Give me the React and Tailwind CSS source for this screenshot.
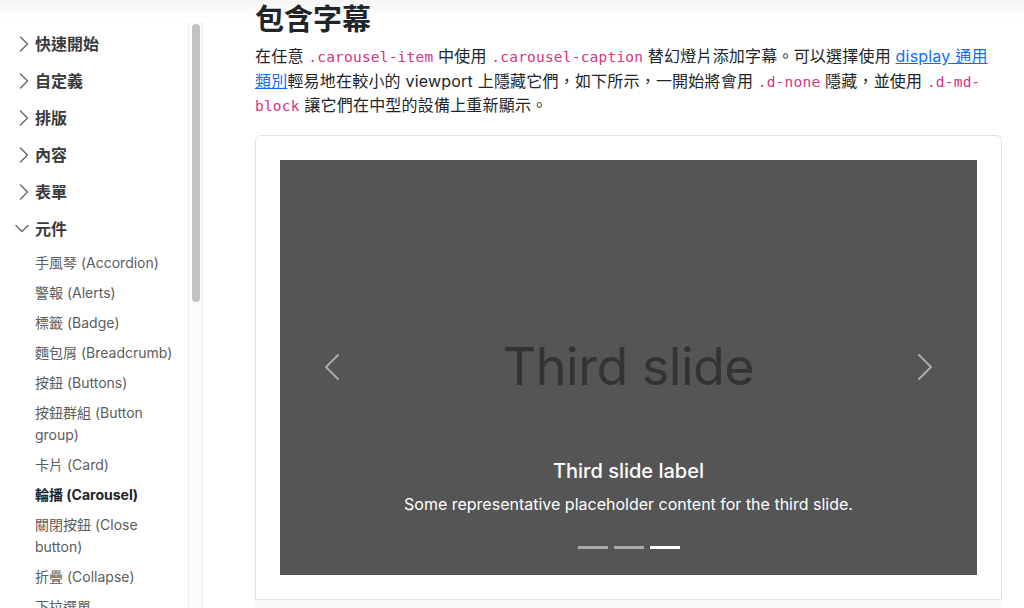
import React from 'react';

const font = 'font-[Inter,"Noto_Sans_CJK_TC",sans-serif]';
const mono = 'font-[DejaVu_Sans_Mono,"Liberation_Mono",monospace] text-[14.5px] leading-none text-[#d63384]';

const sections = ['快速開始', '自定義', '排版', '內容', '表單'];

const components = [
  ['手風琴 (Accordion)'],
  ['警報 (Alerts)'],
  ['標籤 (Badge)'],
  ['麵包屑 (Breadcrumb)'],
  ['按鈕 (Buttons)'],
  ['按鈕群組 (Button', 'group)'],
  ['卡片 (Card)'],
  ['輪播 (Carousel)', null, true],
  ['關閉按鈕 (Close', 'button)'],
  ['折疊 (Collapse)'],
  ['下拉選單'],
];

const Chevron = ({ down }) => (
  <svg width="16" height="16" viewBox="0 0 16 16" fill="none" className="shrink-0 overflow-visible">
    {down ? (
      <path d="M0 4.5 L6 10.5 L12 4.5" stroke="#6b6b6b" strokeWidth="1.5" strokeLinecap="round" strokeLinejoin="round" />
    ) : (
      <path d="M4.5 1 L11.5 8 L4.5 15" stroke="#6b6b6b" strokeWidth="1.5" strokeLinecap="round" strokeLinejoin="round" />
    )}
  </svg>
);

const Control = ({ right }) => (
  <svg width="32" height="32" viewBox="0 0 16 16" fill="#fff" className="opacity-50">
    {right ? (
      <path d="M4.646 1.646a.5.5 0 0 1 .708 0l6 6a.5.5 0 0 1 0 .708l-6 6a.5.5 0 0 1-.708-.708L10.293 8 4.646 2.354a.5.5 0 0 1 0-.708z" />
    ) : (
      <path d="M11.354 1.646a.5.5 0 0 1 0 .708L5.707 8l5.647 5.646a.5.5 0 0 1-.708.708l-6-6a.5.5 0 0 1 0-.708l6-6a.5.5 0 0 1 .708 0z" />
    )}
  </svg>
);

const Sidebar = () => (
  <aside className="w-[203px] shrink-0 flex">
    <nav className="w-[188px] pl-[16px] pt-[25px]">
      {sections.map((s) => (
        <div key={s} className="h-[37px] flex items-center gap-[3px] text-[16px] font-semibold text-[#3a3a3a]">
          <Chevron />
          <span>{s}</span>
        </div>
      ))}
      <div className="h-[37px] flex items-center gap-[3px] text-[16px] font-semibold text-[#3a3a3a]">
        <Chevron down />
        <span>元件</span>
      </div>
      <ul className="pl-[19px] pt-px">
        {components.map(([a, b, active]) => (
          <li
            key={a}
            className={`py-[4px] text-[14px] leading-[22px] whitespace-nowrap ${active ? 'font-bold text-[#212529]' : 'text-[#5c5c5c]'}`}
          >
            {a}
            {b && <br />}
            {b}
          </li>
        ))}
      </ul>
    </nav>
    {/* scrollbar */}
    <div className="w-[15px] mt-[22px] border-l border-r border-[#ebebeb] bg-[#fbfbfb] pt-[2px] pl-[3px]">
      <div className="w-[8px] h-[278px] rounded-full bg-[#c2c2c2]" />
    </div>
  </aside>
);

const Carousel = () => (
  <div className="relative h-[415px] bg-[#555555] flex items-center justify-center">
    <span className="text-[52px] text-[#333333] leading-none tracking-[-0.5px]">Third slide</span>

    <div className="absolute left-0 inset-y-0 w-[15%] flex items-center justify-center">
      <Control />
    </div>
    <div className="absolute right-0 inset-y-0 w-[15%] flex items-center justify-center">
      <Control right />
    </div>

    <div className="absolute left-[15%] right-[15%] bottom-[20px] py-[20px] text-center text-white">
      <h5 className="text-[20px] font-medium leading-[24px] mb-[9px]">Third slide label</h5>
      <p className="text-[16px] leading-[24px] mb-[19px]">Some representative placeholder content for the third slide.</p>
    </div>

    <div className="absolute bottom-[16px] inset-x-0 flex justify-center">
      <span className="mx-[3px] my-[10px] w-[30px] h-[3px] bg-white opacity-50" />
      <span className="mx-[3px] my-[10px] w-[30px] h-[3px] bg-white opacity-50" />
      <span className="mx-[3px] my-[10px] w-[30px] h-[3px] bg-white" />
    </div>
  </div>
);

export default function App() {
  return (
    <div className={`relative h-[608px] overflow-hidden bg-white flex ${font}`}>
      <Sidebar />
      <main className="flex-1 pl-[52px] pr-[22px] text-[#212529]">
        <h3 className="pt-[2px] mb-[7px] text-[29px] font-bold leading-[35px]">包含字幕</h3>
        <p className="text-[16px] leading-[24.5px] mb-[17px] whitespace-nowrap tracking-[0.2px]">
          在任意 <code className={mono}>.carousel-item</code> 中使用 <code className={mono}>.carousel-caption</code> 替幻燈片添加字幕。可以選擇使用{' '}
          <a className="text-[#0d6efd] underline">display 通用</a>
          <br />
          <a className="text-[#0d6efd] underline">類別</a>輕易地在較小的 viewport 上隱藏它們，如下所示，一開始將會用 <code className={mono}>.d-none</code> 隱藏，並使用 <code className={mono}>.d-md-</code>
          <br />
          <code className={mono}>block</code> 讓它們在中型的設備上重新顯示。
        </p>
        <div className="border border-[#dee2e6] rounded-t-[6px] p-[24px]">
          <Carousel />
        </div>
        <div className="h-[40px] bg-[#f8f9fa]" />
      </main>
      {/* faint shadow under the top bar */}
      <div className="pointer-events-none absolute inset-x-0 top-0 h-[20px] bg-gradient-to-b from-black/[0.04] to-transparent" />
    </div>
  );
}
